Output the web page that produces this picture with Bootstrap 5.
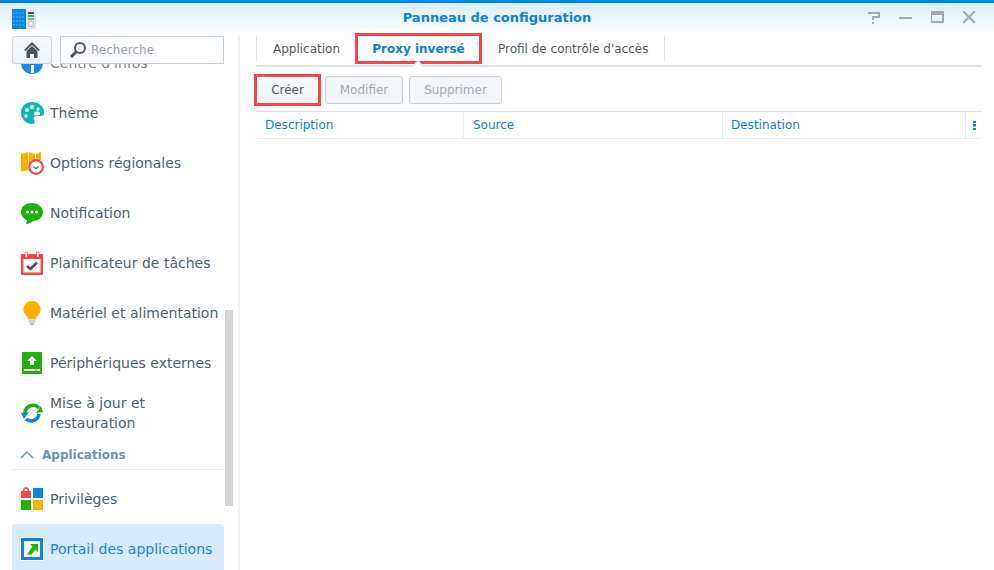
<!DOCTYPE html>
<html lang="fr">
<head>
<meta charset="utf-8">
<title>Panneau de configuration</title>
<link rel="stylesheet" href="https://cdn.jsdelivr.net/npm/bootstrap@5.3.0/dist/css/bootstrap.min.css">
<style>
html,body{height:100%;margin:0;background:#fff;overflow:hidden}
body{font-family:"DejaVu Sans",sans-serif;font-size:13px;color:#505a64;width:994px;height:570px}
.win{height:570px;display:flex;flex-direction:column;border-top:3px solid #0086e5;position:relative}
.titlebar{height:33px;flex:none;position:relative;background:linear-gradient(#dcedfc,#fff);justify-content:center;align-items:center;padding-bottom:3px}
.titlebar .ttl{color:#0a82e0;font-weight:700;font-size:13px}
.logo{position:absolute;left:12px;top:6px}
.winbtns{position:absolute;left:867px;top:8px;display:flex;gap:18px}
.body-row{flex:1;min-height:0}
.side{width:240px;flex:none;border-right:2px solid #eef0f2;position:relative;overflow:hidden}
.side-top{position:absolute;left:12px;top:0;width:212px;z-index:2;display:flex;gap:8px}
.homebtn{width:40px;height:28px;border:1px solid #c8d3e0;border-radius:3px;background:linear-gradient(#fbfcfe,#eef2f8);display:flex;align-items:center;justify-content:center}
.srch{flex:1;height:28px;border:1px solid #c8d3e0;background:#fff;display:flex;align-items:center;padding-left:8px;gap:4px;color:#9aa2ac;font-size:12px}
.listclip{position:absolute;left:0;right:0;top:28px;bottom:0;overflow:hidden}
.listin{margin-top:-26px;padding:0 0 0 12px;width:224px}
.itm{height:50px;display:flex;align-items:center;padding-left:8px;gap:6px;font-size:14px;line-height:20px;color:#505f70}
.itm svg{flex:none;width:24px;height:24px}
.itm.sel{background:#d8ebfd;color:#1a84e0;border-radius:4px 4px 0 0}
.itm.faded{color:#7a8490}
.hdg{height:32px;display:flex;align-items:center;gap:8px;padding-left:8px;padding-top:3px;font-weight:700;color:#6d93b2;font-size:12px;border-bottom:1px solid #e8ebee;margin-bottom:4px}
.sbar{position:absolute;left:225px;top:274px;width:8px;height:196px;background:#d2d4d6}
.content{flex:1;min-width:0;padding:0 12px 0 16px}
.tabsrow{height:31px;border-bottom:2px solid #e2e3e5;position:relative;display:flex;align-items:flex-start}
.tabby{height:25px;display:flex;align-items:center;font-size:12px;color:#505a64}
.tabby.t1{width:102px;padding-left:16px;border-left:1px solid #dfe5ec}
.tabby.t2{width:121px;justify-content:center;color:#0a7fdc;font-weight:700;outline:3px solid #f5444a;position:relative}
.tabby.t3{width:183px;padding-left:16px;border-right:1px solid #dfe5ec;margin-left:3px}
.notch{position:absolute;left:158px;top:26px;width:8px;height:8px;background:#fff;border:1px solid #e2e3e5;border-width:1px 0 0 1px;transform:rotate(45deg)}
.tools{display:flex;gap:6px;margin:9px 0 7px;height:28px}
.tbtn{height:28px;border:1px solid #c8d3e0;border-radius:3px;background:linear-gradient(#fbfcfe,#eef2f8);font-size:12px;display:flex;align-items:center;justify-content:center;color:#505a64}
.tbtn.b1{width:63px;outline:3px solid #f5444a;outline-offset:-1px;border-radius:0}
.tbtn.dis{color:#a4abb5;background:#f3f5f8}
.tbtn.b2{width:78px}.tbtn.b3{width:93px}
.thead{height:28px;display:flex;border-top:1px solid #dbe1e8;border-bottom:1px solid #e9edf1;font-size:12px;color:#0a7fdc}
.thead>div{display:flex;align-items:center;padding-left:9px;border-right:1px solid #e4eaf0}
.c1{width:208px}.c2{width:259px}.c3{width:243px}
.thead>.c3{padding-left:8px}
.thead>.c4{flex:1;border-right:0;padding-left:7px}
</style>
</head>
<body>
<div class="win">
  <div class="titlebar d-flex">
    <svg class="logo" width="24" height="21" viewBox="0 0 24 21"><rect width="14" height="20" fill="#0a86e2"/><path d="M1 4h12M1 8h12M1 12h12M1 16h12" stroke="#5cb6f2" stroke-width="1" stroke-dasharray="2 1"/><rect x="14" y="1" width="10" height="19" fill="#dfe2e6"/><rect x="16" y="3" width="6" height="2" fill="#4e5a68"/><rect x="16" y="6" width="6" height="2" fill="#1fa8e8"/><rect x="16" y="9" width="6" height="2" fill="#7cc34a"/><circle cx="19" cy="15" r="2.600" fill="#f4f6f7" stroke="#b0b6bd"/></svg>
    <div class="ttl">Panneau de configuration</div>
    <div class="winbtns">
      <svg width="14" height="14" viewBox="0 0 14 14" fill="none" stroke="#a3a8ae" stroke-width="2"><path d="M1 2h11v4H6v3"/><path d="M6 11v2"/></svg>
      <svg width="14" height="14" viewBox="0 0 14 14"><rect x="0" y="6" width="13" height="2" fill="#a3a8ae"/></svg>
      <svg width="14" height="14" viewBox="0 0 14 14"><rect x="0" y="1" width="12" height="10" fill="none" stroke="#a3a8ae" stroke-width="2"/><rect x="0" y="1" width="12" height="3" fill="#a3a8ae"/></svg>
      <svg width="14" height="14" viewBox="0 0 14 14"><path d="M0 0l12 12M12 0L0 12" stroke="#a3a8ae" stroke-width="2"/></svg>
    </div>
  </div>
  <div class="body-row d-flex">
    <aside class="side">
      <div class="side-top">
        <div class="homebtn"><svg width="18" height="18" viewBox="0 0 18 18"><path d="M9 1L1 9l1.500 1L9 4l6.500 6L17 9z" fill="#48525c"/><path d="M3.500 10L9 5l5.500 5v7H11v-4H7v4H3.500z" fill="#48525c"/></svg></div>
        <div class="srch"><svg width="18" height="18" viewBox="0 0 18 18" fill="none" stroke="#48525c"><circle cx="11" cy="7" r="5" stroke-width="2"/><path d="M7 11l-5 5" stroke-width="3"/></svg><span>Recherche</span></div>
      </div>
      <div class="listclip">
        <div class="listin">
          <div class="itm faded"><svg viewBox="0 0 24 24"><circle cx="12" cy="12" r="11" fill="#1a8ae6"/><path d="M1 12a11 11 0 0 1 22 0z" fill="#7cc0f5"/><rect x="11" y="14" width="3" height="8" fill="#fff"/></svg><span>Centre d'infos</span></div>
          <div class="itm"><svg viewBox="0 0 24 24"><path d="M12 1C5 1 1 6 1 12s5 11 11 11c3 0 3-2 2-4s0-4 3-4h4c2 0 3-1 3-4C24 5 18 1 12 1z" fill="#0ab8b4"/><circle cx="7" cy="9" r="2" fill="#fff"/><circle cx="12" cy="6" r="2" fill="#fff"/><circle cx="18" cy="8" r="1.700" fill="#fff"/><circle cx="6" cy="15" r="1.700" fill="#fff"/><ellipse cx="17" cy="12.500" rx="3" ry="2" fill="#fff"/></svg><span>Thème</span></div>
          <div class="itm"><svg viewBox="0 0 24 24"><path d="M1 3l7-2 0 18-7 2zM9 1l6 2v7l-6 8zM16 3l5-2v8l-5 1z" fill="#fdb000"/><circle cx="16" cy="16" r="6.800" fill="#fff" stroke="#f5444a" stroke-width="2.200"/><path d="M13.500 16l2.500 1.500 2.500-2" fill="none" stroke="#566" stroke-width="1.300"/></svg><span>Options régionales</span></div>
          <div class="itm"><svg viewBox="0 0 24 24"><path d="M12 2C5 2 1 6 1 11c0 4 3 7 6 8l-1 4c3 0 6-2 7-3 6 0 10-4 10-9S18 2 12 2z" fill="#1fb108"/><circle cx="7.500" cy="11" r="1.500" fill="#fff"/><circle cx="12" cy="11" r="1.500" fill="#fff"/><circle cx="16.500" cy="11" r="1.500" fill="#fff"/></svg><span>Notification</span></div>
          <div class="itm"><svg viewBox="0 0 24 24"><rect x="1" y="3" width="22" height="21" rx="1" fill="#f5444a"/><rect x="3.500" y="8" width="17" height="13.500" fill="#fff"/><rect x="5" y="1" width="2.500" height="5" fill="#fff" stroke="#f5444a" stroke-width=".6"/><rect x="16.500" y="1" width="2.500" height="5" fill="#fff" stroke="#f5444a" stroke-width=".6"/><path d="M7 15l3.500 3L17 11.500" fill="none" stroke="#4a525c" stroke-width="2.500"/></svg><span>Planificateur de tâches</span></div>
          <div class="itm"><svg viewBox="0 0 24 24"><path d="M12 0a8.500 8.500 0 0 0-5.500 15c1 1 1.500 2 2 3.500h7c.5-1.500 1-2.500 2-3.500A8.500 8.500 0 0 0 12 0z" fill="#fdb000"/><path d="M8.500 20h7M9.500 22h5" stroke="#9aa0a8" stroke-width="1.200"/><path d="M10.500 23.500h3" stroke="#9aa0a8"/></svg><span>Matériel et alimentation</span></div>
          <div class="itm"><svg viewBox="0 0 24 24"><rect x="2" y="1" width="20" height="22" fill="#1fb108"/><path d="M12 5l5 5h-3v4h-4v-4H7z" fill="#fff"/><rect x="4" y="18" width="16" height="2" fill="#fff"/><rect x="15" y="18" width="2" height="2" fill="#f5c518"/></svg><span>Périphériques externes</span></div>
          <div class="itm"><svg viewBox="0 0 24 24" fill="none" stroke-width="3.500"><path d="M5 12A8 8 0 0 1 19 7" stroke="#1fb108"/><path d="M16 12l7-1-2-6z" fill="#1fb108" stroke="none"/><path d="M19 13A8 8 0 0 1 6 18" stroke="#0a86e2"/><path d="M9 11l-8 1 3 6z" fill="#0a86e2" stroke="none"/></svg><span>Mise à jour et<br>restauration</span></div>
          <div class="hdg"><svg width="14" height="8" viewBox="0 0 14 8" fill="none" stroke="#7d9cb8" stroke-width="1.600"><path d="M1 7l6-6 6 6"/></svg><span>Applications</span></div>
          <div class="itm"><svg viewBox="0 0 24 24"><rect x="13" y="1" width="10" height="10" fill="#0a86e2"/><rect x="1" y="13" width="10" height="10" fill="#1fb108"/><rect x="13" y="13" width="10" height="10" fill="#fdb000"/><rect x="1" y="4" width="10" height="7" fill="#f5444a"/><path d="M3.500 5V3.500a2.500 2.500 0 0 1 5 0V5" fill="none" stroke="#f5444a" stroke-width="1.500"/></svg><span>Privilèges</span></div>
          <div class="itm sel"><svg viewBox="0 0 24 24"><rect width="24" height="24" fill="#fff" rx="1"/><rect x="2.500" y="2.500" width="19" height="19" fill="#fff" stroke="#0a86e2" stroke-width="3"/><path d="M10 7h8v8l-2.500-2.500-4 5H7l5.500-8z" fill="#1fb108"/></svg><span>Portail des applications</span></div>
        </div>
      </div>
      <div class="sbar"></div>
    </aside>
    <main class="content">
      <div class="tabsrow">
        <div class="tabby t1">Application</div>
        <div class="tabby t2">Proxy inversé</div>
        <div class="tabby t3">Profil de contrôle d'accès</div>
        <div class="notch"></div>
      </div>
      <div class="tools">
        <div class="tbtn b1">Créer</div>
        <div class="tbtn dis b2">Modifier</div>
        <div class="tbtn dis b3">Supprimer</div>
      </div>
      <div class="thead">
        <div class="c1">Description</div>
        <div class="c2">Source</div>
        <div class="c3">Destination</div>
        <div class="c4"><svg width="3" height="9" viewBox="0 0 3 9" fill="#0a86e2"><rect width="3" height="2"/><rect y="3" width="3" height="2.500"/><rect y="7" width="3" height="2"/></svg></div>
      </div>
    </main>
  </div>
</div>
<script src="https://cdn.jsdelivr.net/npm/bootstrap@5.3.0/dist/js/bootstrap.bundle.min.js"></script>
</body>
</html>
